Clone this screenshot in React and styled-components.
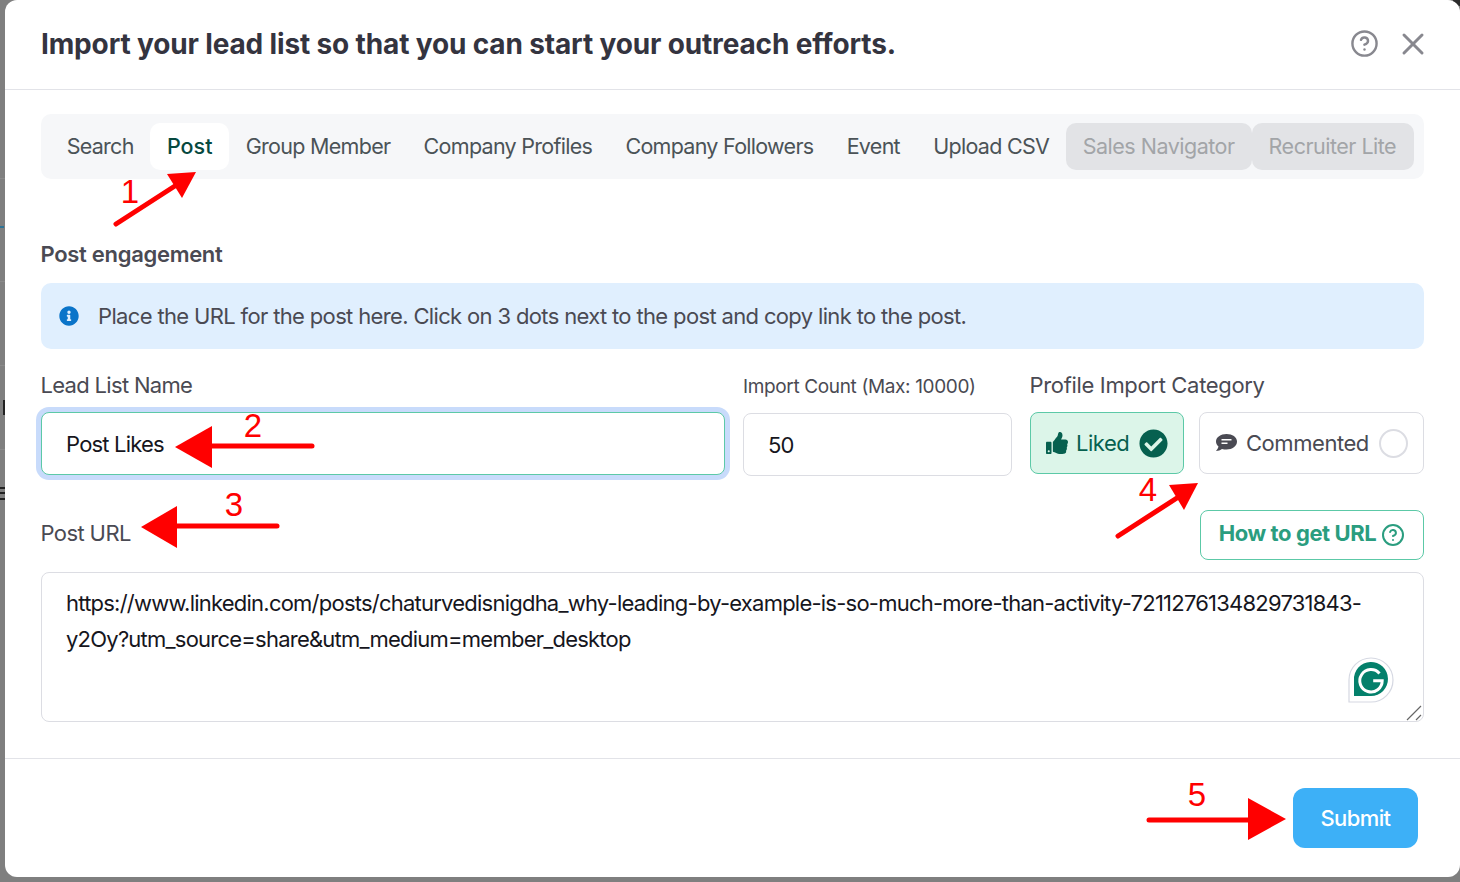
import React from "react";
import styled, { createGlobalStyle } from "styled-components";
import { CircleHelp, X } from "lucide-react";
import { FaCheckCircle, FaInfoCircle, FaThumbsUp } from "react-icons/fa";

const GlobalStyle = createGlobalStyle`
  html, body {
    margin: 0;
    padding: 0;
    height: 100%;
    overflow: hidden;
    background: #7f7f7f;
  }
  * {
    box-sizing: border-box;
  }
  body {
    font-family: Inter, "Noto Sans", "Liberation Sans", sans-serif;
  }
`;

const Backdrop = styled.div`
  position: relative;
  width: 1460px;
  height: 882px;
  padding: 0 0 5px 5px;
  background: #7f7f7f;
`;

/* bits of the page behind the dialog, only a sliver of them shows */
const BehindMark = styled.div`
  position: absolute;
  left: ${(p) => p.$x}px;
  top: ${(p) => p.$y}px;
  width: ${(p) => p.$w}px;
  height: ${(p) => p.$h}px;
  background: ${(p) => p.$color};
`;

const Modal = styled.div`
  position: relative;
  display: flex;
  flex-direction: column;
  height: 877px;
  background: #fff;
  border-radius: 12px;
`;

const Header = styled.div`
  display: flex;
  align-items: center;
  justify-content: space-between;
  height: 90px;
  padding: 0 29px 0 36px;
  border-bottom: 1px solid #e2e3e8;
`;

const Title = styled.h2`
  margin: 0 0 2px;
  font-size: 28px;
  font-weight: 700;
  letter-spacing: -0.15px;
  color: #34343f;
`;

const HeaderIcons = styled.div`
  display: flex;
  align-items: center;
  gap: 16px;
  margin-bottom: 2px;
  color: #88888f;
`;

const Body = styled.div`
  flex: 1;
  display: flex;
  flex-direction: column;
  padding: 24px 36px 0;
`;

const TabBar = styled.div`
  display: flex;
  height: 65px;
  padding: 9px 10px 9px 9px;
  background: #f6f7f9;
  border-radius: 10px;
`;

const Tab = styled.div`
  display: flex;
  align-items: center;
  padding: ${(p) => (p.$disabled ? "0 17px 2px" : "0 16.65px 2px")};
  border-radius: 10px;
  font-size: 21.5px;
  letter-spacing: ${(p) => (p.$active ? "0" : p.$disabled ? "-0.5px" : "-0.72px")};
  white-space: nowrap;
  color: ${(p) => (p.$disabled ? "#a2a5a8" : p.$active ? "#06493f" : "#4b5357")};
  font-weight: ${(p) => (p.$active ? 500 : 400)};
  background: ${(p) => (p.$active ? "#fff" : p.$disabled ? "#e2e3e6" : "transparent")};

  &:last-child {
    flex: 1;
  }
`;

const SectionTitle = styled.div`
  margin: 61px 0 0 -0.5px;
  height: 29px;
  line-height: 29px;
  font-size: 22px;
  font-weight: 600;
  letter-spacing: -0.3px;
  color: #4a4a53;
`;

const Notice = styled.div`
  display: flex;
  align-items: center;
  gap: 19px;
  height: 66px;
  margin-top: 14px;
  padding: 0 18px;
  background: #e0effe;
  border-radius: 10px;
  font-size: 22px;
  letter-spacing: -0.65px;
  color: #4a4a53;
`;

const FieldRow = styled.div`
  display: grid;
  grid-template-columns: 684px 269px 394px;
  column-gap: 18px;
  margin-top: 21px;
`;

const Field = styled.div`
  display: flex;
  flex-direction: column;
`;

const Label = styled.label`
  display: block;
  height: 30px;
  line-height: 30px;
  margin: 0 0 12px -0.5px;
  font-size: 22px;
  letter-spacing: ${(p) => p.$spacing || "-0.33px"};
  color: #4a4a53;
  white-space: nowrap;
`;

const CountLabel = styled(Label)`
  height: 33px;
  line-height: 34px;
  margin: 0 0 10px;
  font-size: 19px;
  letter-spacing: -0.36px;
`;

const TextInput = styled.input`
  width: 100%;
  height: 63px;
  padding: 1px 24px 0;
  border: 1px solid ${(p) => (p.$focused ? "#5cc9a7" : "#dcdde3")};
  border-radius: 8px;
  outline: none;
  box-shadow: ${(p) => (p.$focused ? "0 0 0 5px #c8dbfb" : "none")};
  font-family: inherit;
  font-size: 22px;
  letter-spacing: -0.8px;
  color: #16161d;
  background: #fff;
`;

const CategoryRow = styled.div`
  display: flex;
  gap: 15px;
`;

const Category = styled.div`
  display: flex;
  align-items: center;
  justify-content: space-between;
  width: ${(p) => p.$width}px;
  height: 62px;
  padding: 0 15px;
  border: 1px solid ${(p) => (p.$active ? "#5cc9a7" : "#dcdde3")};
  border-radius: 8px;
  background: ${(p) => (p.$active ? "#dcf5e9" : "#fff")};
  color: ${(p) => (p.$active ? "#06604f" : "#4a4a53")};
  font-size: 22px;
  letter-spacing: -0.45px;
`;

const CategoryName = styled.span`
  display: flex;
  align-items: center;
  gap: 8px;
`;

const EmptyRadio = styled.span`
  width: 29px;
  height: 29px;
  border: 2px solid #dcdde3;
  border-radius: 50%;
`;

const UrlHead = styled.div`
  display: flex;
  align-items: flex-start;
  justify-content: space-between;
  margin-top: 34px;
  height: 50px;
`;

const UrlLabel = styled(Label)`
  margin: 8px 0 0 -0.5px;
`;

const HowToButton = styled.button`
  display: flex;
  align-items: center;
  justify-content: center;
  gap: 5px;
  width: 224px;
  height: 50px;
  padding: 0 0 4px;
  border: 1px solid #5cc9a7;
  border-radius: 8px;
  background: #fff;
  color: #2a9d7f;
  font-family: inherit;
  font-size: 22px;
  font-weight: 700;
  letter-spacing: -0.4px;
`;

const HowToIcon = styled(CircleHelp)`
  margin-top: 3px;
`;

const TextareaWrap = styled.div`
  position: relative;
  margin-top: 12px;
  height: 150px;
`;

const UrlArea = styled.textarea`
  display: block;
  width: 100%;
  height: 150px;
  padding: 12px 24px;
  border: 1px solid #dcdde3;
  border-radius: 8px;
  outline: none;
  resize: none;
  font-family: inherit;
  font-size: 22px;
  line-height: 36px;
  letter-spacing: -0.77px;
  color: #16161d;
  overflow: hidden;
`;

const GrammarlyBadge = styled.svg`
  position: absolute;
  right: 30px;
  bottom: 19px;
`;

const ResizeGrip = styled.svg`
  position: absolute;
  right: 1px;
  bottom: 1px;
`;

const Footer = styled.div`
  display: flex;
  justify-content: flex-end;
  align-items: flex-start;
  height: 119px;
  padding: 29px 42px 0 0;
  border-top: 1px solid #e2e3e8;
`;

const SubmitButton = styled.button`
  width: 125px;
  height: 60px;
  border: none;
  border-radius: 12px;
  background: #3db0f7;
  color: #fff;
  font-family: inherit;
  font-size: 22px;
  font-weight: 500;
  letter-spacing: -0.6px;
`;

const ArrowLayer = styled.svg`
  position: absolute;
  inset: 0;
  pointer-events: none;
`;

const StepNumber = styled.span`
  position: absolute;
  left: ${(p) => p.$x}px;
  top: ${(p) => p.$y}px;
  transform: translate(-50%, -50%);
  font-family: "Liberation Sans", Arial, sans-serif;
  font-size: 33px;
  line-height: 1;
  color: #f00;
`;

const TABS = [
  { name: "Search" },
  { name: "Post", active: true },
  { name: "Group Member" },
  { name: "Company Profiles" },
  { name: "Company Followers" },
  { name: "Event" },
  { name: "Upload CSV" },
  { name: "Sales Navigator", disabled: true },
  { name: "Recruiter Lite", disabled: true },
];

const ARROWS = [
  { tail: "116,224 178,184", head: "167,174 196,172 182,198" },
  { tail: "312,446 205,446", head: "175,447 212,426 212,468" },
  { tail: "277,526 170,526", head: "141,527 177,506 177,548" },
  { tail: "1118,536 1180,496", head: "1169,485 1198,483 1184,510" },
  { tail: "1149,820 1255,820", head: "1286,819 1248,798 1248,840" },
];

const STEPS = [
  { n: 1, x: 130, y: 191 },
  { n: 2, x: 253, y: 425 },
  { n: 3, x: 234, y: 504 },
  { n: 4, x: 1148, y: 489 },
  { n: 5, x: 1197, y: 794 },
];

const BEHIND_MARKS = [
  { x: 0, y: 178, w: 5, h: 1, color: "#8a8a8a" },
  { x: 0, y: 226, w: 4, h: 2, color: "#2d7396" },
  { x: 0, y: 281, w: 5, h: 1, color: "#8a8a8a" },
  { x: 0, y: 365, w: 5, h: 1, color: "#8a8a8a" },
  { x: 3, y: 400, w: 2, h: 15, color: "#222" },
  { x: 0, y: 449, w: 5, h: 1, color: "#8a8a8a" },
  { x: 0, y: 487, w: 5, h: 2, color: "#222" },
  { x: 0, y: 492, w: 5, h: 2, color: "#222" },
  { x: 0, y: 498, w: 5, h: 2, color: "#222" },
  { x: 1453, y: 0, w: 7, h: 6, color: "#2b2b2b" },
];

function CommentIcon() {
  return (
    <svg width="23" height="20" viewBox="0 0 23 20">
      <path
        fill="#4a4a53"
        d="M11.500 1C5.700 1 1 4.300 1 8.600c0 1.900 1 3.700 2.500 5-.3 1.500-1.200 3-2.500 4.400 2.300 0 4.500-.8 6-2 1.400.4 3 .6 4.500.6 5.800 0 10.500-3.500 10.500-8S17.300 1 11.500 1z"
      />
      <path stroke="#fff" strokeWidth="1.600" d="M6.500 6.800h10M6.500 10.300h6" />
    </svg>
  );
}

function GrammarlyIcon() {
  return (
    <GrammarlyBadge width="46" height="46" viewBox="0 0 46 46">
      <path
        fill="#fff"
        stroke="#d5d8e2"
        strokeWidth="1.200"
        d="M1 45V23a22 22 0 1 1 22 22z"
      />
      <path fill="#04806b" d="M6 39V23a17 17 0 1 1 17 16z" />
      <path
        fill="none"
        stroke="#fff"
        strokeWidth="3"
        d="M31.500 16.500a11.200 11.200 0 1 0 2.700 7.300h-9"
      />
    </GrammarlyBadge>
  );
}

function App() {
  return (
    <Backdrop>
      <GlobalStyle />
      {BEHIND_MARKS.map((mark) => (
        <BehindMark
          key={`${mark.x}-${mark.y}`}
          $x={mark.x}
          $y={mark.y}
          $w={mark.w}
          $h={mark.h}
          $color={mark.color}
        />
      ))}
      <Modal>
        <Header>
          <Title>Import your lead list so that you can start your outreach efforts.</Title>
          <HeaderIcons>
            <CircleHelp size={29} strokeWidth={2} />
            <X size={36} strokeWidth={2} />
          </HeaderIcons>
        </Header>

        <Body>
          <TabBar>
            {TABS.map((tab) => (
              <Tab key={tab.name} $active={tab.active} $disabled={tab.disabled}>
                {tab.name}
              </Tab>
            ))}
          </TabBar>

          <SectionTitle>Post engagement</SectionTitle>
          <Notice>
            <FaInfoCircle size={20} color="#0a74c9" />
            Place the URL for the post here. Click on 3 dots next to the post and copy link to the post.
          </Notice>

          <FieldRow>
            <Field>
              <Label $spacing="-0.68px">Lead List Name</Label>
              <TextInput $focused defaultValue="Post Likes" />
            </Field>
            <Field>
              <CountLabel>Import Count (Max: 10000)</CountLabel>
              <TextInput defaultValue="50" />
            </Field>
            <Field>
              <Label>Profile Import Category</Label>
              <CategoryRow>
                <Category $active $width={154}>
                  <CategoryName>
                    <FaThumbsUp size={22} />
                    Liked
                  </CategoryName>
                  <FaCheckCircle size={29} />
                </Category>
                <Category $width={225}>
                  <CategoryName>
                    <CommentIcon />
                    Commented
                  </CategoryName>
                  <EmptyRadio />
                </Category>
              </CategoryRow>
            </Field>
          </FieldRow>

          <UrlHead>
            <UrlLabel $spacing="-0.6px">Post URL</UrlLabel>
            <HowToButton>
              How to get URL
              <HowToIcon size={24} strokeWidth={2} />
            </HowToButton>
          </UrlHead>

          <TextareaWrap>
            <UrlArea defaultValue="https://www.linkedin.com/posts/chaturvedisnigdha_why-leading-by-example-is-so-much-more-than-activity-7211276134829731843-y2Oy?utm_source=share&utm_medium=member_desktop" />
            <GrammarlyIcon />
            <ResizeGrip width="18" height="16" viewBox="0 0 18 16">
              <path stroke="#666" strokeWidth="1.200" d="M2 15 16 1M11 15l5-5" />
            </ResizeGrip>
          </TextareaWrap>
        </Body>

        <Footer>
          <SubmitButton>Submit</SubmitButton>
        </Footer>
      </Modal>

      <ArrowLayer width="1460" height="882" viewBox="0 0 1460 882">
        {ARROWS.map((arrow) => (
          <g key={arrow.head}>
            <polyline points={arrow.tail} fill="none" stroke="#f00" strokeWidth="5" strokeLinecap="round" />
            <polygon points={arrow.head} fill="#f00" />
          </g>
        ))}
      </ArrowLayer>
      {STEPS.map((step) => (
        <StepNumber key={step.n} $x={step.x} $y={step.y}>
          {step.n}
        </StepNumber>
      ))}
    </Backdrop>
  );
}

export default App;
